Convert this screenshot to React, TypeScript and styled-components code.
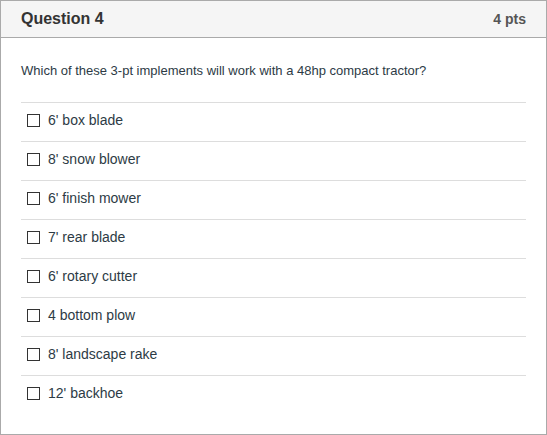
import React from 'react';
import styled, { createGlobalStyle } from 'styled-components';

const GlobalStyle = createGlobalStyle`
  html, body {
    margin: 0;
    padding: 0;
    background: #fff;
  }
  body {
    font-family: 'Liberation Sans', Arial, sans-serif;
    color: #2d3b45;
  }
`;

const QuizCard = styled.div`
  box-sizing: border-box;
  width: 547px;
  height: 435px;
  border: 1px solid #aaa;
  background: #fff;
`;

const CardHeader = styled.div`
  display: flex;
  justify-content: space-between;
  align-items: center;
  height: 36px;
  padding: 0 20px;
  background: #f5f5f5;
  border-bottom: 1px solid #aaa;

  .title {
    font-size: 16px;
    font-weight: bold;
    color: #333;
  }

  .points {
    font-size: 14px;
    font-weight: bold;
    color: #555;
  }
`;

const CardBody = styled.div`
  padding: 24px 20px 0;
`;

const QuestionText = styled.p`
  margin: 0 0 22px;
  font-size: 13px;
  line-height: 18px;
`;

const AnswerList = styled.ul`
  list-style: none;
  margin: 0;
  padding: 0;
`;

const AnswerRow = styled.li`
  display: flex;
  align-items: center;
  box-sizing: border-box;
  height: 39px;
  padding-bottom: 4px;
  border-top: 1px solid #ddd;
`;

const Check = styled.input`
  appearance: none;
  box-sizing: border-box;
  width: 13px;
  height: 13px;
  margin: 0 8px 0 6px;
  border: 1px solid #333;
  border-radius: 0;
  background: #fff;
`;

const AnswerLabel = styled.label`
  font-size: 14px;
  line-height: 18px;
`;

const answers = [
  "6' box blade",
  "8' snow blower",
  "6' finish mower",
  "7' rear blade",
  "6' rotary cutter",
  '4 bottom plow',
  "8' landscape rake",
  "12' backhoe",
];

export default function App() {
  return (
    <>
      <GlobalStyle />
      <QuizCard>
        <CardHeader>
          <span className="title">Question 4</span>
          <span className="points">4 pts</span>
        </CardHeader>
        <CardBody>
          <QuestionText>
            Which of these 3-pt implements will work with a 48hp compact tractor?
          </QuestionText>
          <AnswerList>
            {answers.map((a, i) => (
              <AnswerRow key={a}>
                <Check type="checkbox" id={`ans-${i}`} />
                <AnswerLabel htmlFor={`ans-${i}`}>{a}</AnswerLabel>
              </AnswerRow>
            ))}
          </AnswerList>
        </CardBody>
      </QuizCard>
    </>
  );
}
